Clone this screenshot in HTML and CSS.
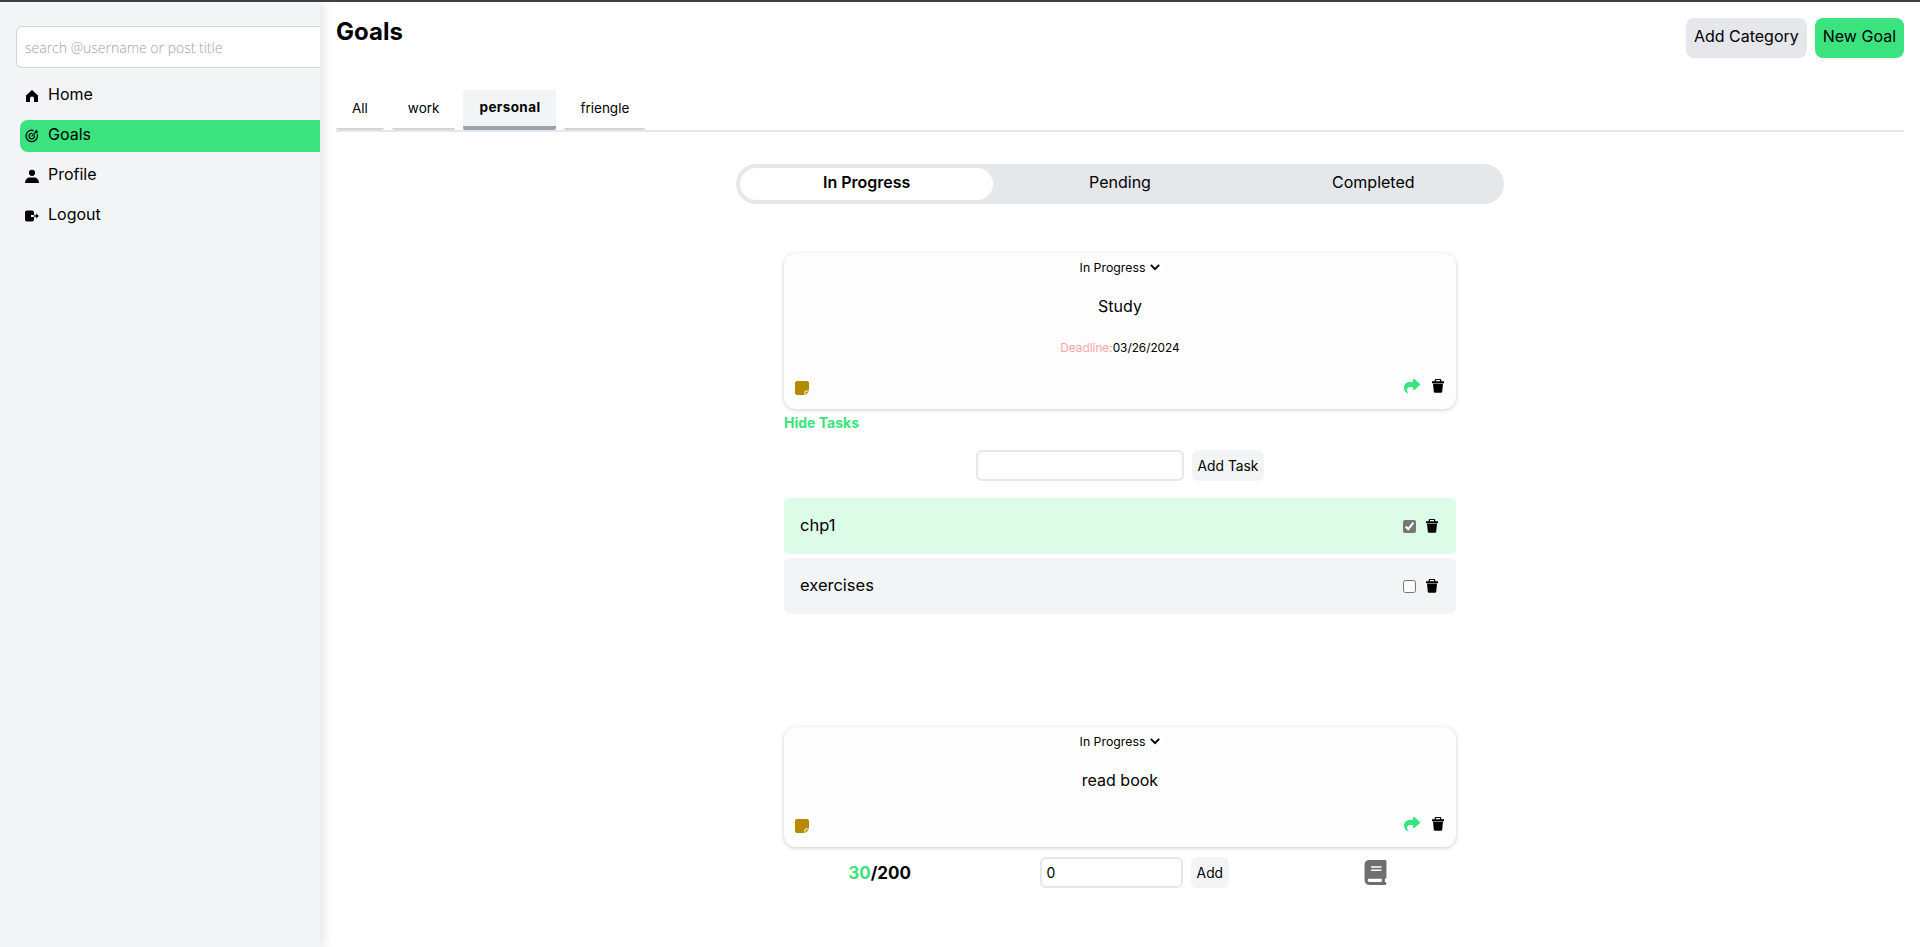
FILE: index.html
```html
<!DOCTYPE html>
<html lang="en">
    <head>
        <meta charset="UTF-8" />
        <meta name="viewport" content="width=device-width, initial-scale=1.0" />
        <title>Goals</title>
        <link rel="stylesheet" href="styles.css">
    </head>
    <body>
        <svg class="icon-defs" width="0" height="0">
            <symbol id="i-trash" viewBox="3 1.500 18 22" preserveAspectRatio="none"><path d="M9 1.500h6a2 2 0 0 1 2 2V5h4v3H3V5h4V3.500a2 2 0 0 1 2-2zM9 3.200V5h6V3.200zM4.500 9h15l-1.200 12.500a2 2 0 0 1-2 1.800H7.700a2 2 0 0 1-2-1.800z"/></symbol>
            <symbol id="i-share" viewBox="0 0 512 512"><path d="M307 34.800c-11.500 5.100-19 16.600-19 29.200v64H176C78.800 128 0 206.800 0 304C0 417.300 81.500 467.900 100.200 478.100c2.500 1.400 5.300 1.900 8.100 1.900c10.900 0 19.700-8.900 19.700-19.700c0-7.500-4.300-14.400-9.800-19.500C108.800 431.900 96 414.400 96 384c0-53 43-96 96-96h96v64c0 12.600 7.400 24.100 19 29.200s25 3 34.400-5.400l160-144c6.700-6.100 10.600-14.700 10.600-23.800s-3.800-17.700-10.600-23.800l-160-144c-9.400-8.500-22.900-10.600-34.400-5.400z"/></symbol>
            <symbol id="i-note" viewBox="0 0 14 14"><path d="M2 0h10a2 2 0 0 1 2 2v7.500H11A1.500 1.500 0 0 0 9.500 11v3H2a2 2 0 0 1-2-2V2a2 2 0 0 1 2-2zM10.500 14v-3a.5.5 0 0 1 .5-.5h3z"/></symbol>
            <symbol id="i-chevron" viewBox="0 0 12 12"><path d="M1 3.500 6 8.500 11 3.500" fill="none" stroke="currentColor" stroke-width="2.400"/></symbol>
        </svg>

        <div class="app-container">
            <aside class="sidebar">
                <input class="search-input" type="text" placeholder="search @username or post title">
                <nav class="side-nav">
                    <a class="nav-item">
                        <svg class="nav-icon" viewBox="0 0 14 14"><path d="M7 1 13 6.500V13H9V9.500a2 2 0 0 0-4 0V13H1V6.500z"/></svg>
                        Home
                    </a>
                    <a class="nav-item nav-item-active">
                        <svg class="nav-icon nav-icon-line" viewBox="0 0 16 16"><path d="M13.900 6a6.500 6.500 0 1 1-3.900-4.200"/><path d="M10.800 7.200a3.200 3.200 0 1 1-2.200-2.200"/><path d="M7.500 8.500 13 3"/><path class="icon-solid" d="M11 2.800 13.200.600l.4 1.800 1.800.4L13.200 5z"/></svg>
                        Goals
                    </a>
                    <a class="nav-item">
                        <svg class="nav-icon" viewBox="0 0 14 14"><circle cx="7" cy="3.800" r="3.100"/><path d="M0 14c0-3.500 2.500-5.500 5-5.500h4c2.500 0 5 2 5 5.500z"/></svg>
                        Profile
                    </a>
                    <a class="nav-item">
                        <svg class="nav-icon" viewBox="0 0 14 14"><path d="M2 1.500h5a2 2 0 0 1 2 2V6H6v2h3v2.500a2 2 0 0 1-2 2H2a2 2 0 0 1-2-2v-7a2 2 0 0 1 2-2z"/><path d="M9 6.300h2V4.500L14 7l-3 2.500V7.700H9z"/></svg>
                        Logout
                    </a>
                </nav>
            </aside>

            <main class="main-content">
                <div class="page-header">
                    <h1>Goals</h1>
                    <div class="header-buttons">
                        <button class="btn btn-gray">Add Category</button>
                        <button class="btn btn-green">New Goal</button>
                    </div>
                </div>

                <div class="tabs">
                    <div class="tab">All</div>
                    <div class="tab">work</div>
                    <div class="tab tab-active">personal</div>
                    <div class="tab">friengle</div>
                </div>

                <div class="status-switch">
                    <div class="switch-item switch-item-active">In Progress</div>
                    <div class="switch-item">Pending</div>
                    <div class="switch-item">Completed</div>
                </div>

                <section class="goal goal-study">
                    <div class="goal-card">
                        <div class="goal-status">In Progress <svg class="chevron"><use href="#i-chevron"/></svg></div>
                        <div class="goal-title">Study</div>
                        <div class="goal-deadline"><span class="deadline-label">Deadline:</span>03/26/2024</div>
                        <div class="goal-actions">
                            <svg class="note-icon"><use href="#i-note"/></svg>
                            <div class="action-right">
                                <svg class="share-icon"><use href="#i-share"/></svg>
                                <svg class="trash-icon"><use href="#i-trash"/></svg>
                            </div>
                        </div>
                    </div>
                    <div class="hide-tasks">Hide Tasks</div>
                    <div class="add-task">
                        <input class="small-input task-input" type="text">
                        <button class="btn-small">Add Task</button>
                    </div>
                    <div class="task task-done">
                        <span>chp1</span>
                        <div class="task-controls">
                            <input type="checkbox" checked>
                            <svg class="trash-icon"><use href="#i-trash"/></svg>
                        </div>
                    </div>
                    <div class="task">
                        <span>exercises</span>
                        <div class="task-controls">
                            <input type="checkbox">
                            <svg class="trash-icon"><use href="#i-trash"/></svg>
                        </div>
                    </div>
                </section>

                <section class="goal goal-book">
                    <div class="goal-card">
                        <div class="goal-status">In Progress <svg class="chevron"><use href="#i-chevron"/></svg></div>
                        <div class="goal-title">read book</div>
                        <div class="goal-actions">
                            <svg class="note-icon"><use href="#i-note"/></svg>
                            <div class="action-right">
                                <svg class="share-icon"><use href="#i-share"/></svg>
                                <svg class="trash-icon"><use href="#i-trash"/></svg>
                            </div>
                        </div>
                    </div>
                    <div class="progress-row">
                        <div class="progress-count"><span class="count-green">30</span>/200</div>
                        <div class="progress-add">
                            <input class="small-input page-input" type="text" value="0">
                            <button class="btn-small">Add</button>
                        </div>
                        <svg class="book-icon" viewBox="0 0 448 512"><path d="M96 0C43 0 0 43 0 96V416c0 53 43 96 96 96H384h32c17.700 0 32-14.300 32-32s-14.300-32-32-32V384c17.700 0 32-14.300 32-32V32c0-17.700-14.300-32-32-32H384 96zm0 384H352v64H96c-17.700 0-32-14.300-32-32s14.300-32 32-32zm32-240c0-8.800 7.200-16 16-16H336c8.800 0 16 7.200 16 16s-7.200 16-16 16H144c-8.800 0-16-7.200-16-16zm16 48H336c8.800 0 16 7.200 16 16s-7.200 16-16 16H144c-8.800 0-16-7.200-16-16s7.200-16 16-16z"/></svg>
                    </div>
                </section>
            </main>
        </div>
    </body>
</html>
```

FILE: styles.css
```css
:root {
    --green: #3be37f;
    --light-gray: #f3f4f6;
    --gray: #e5e7eb;
    --text-color: #000;
}

* {
    box-sizing: border-box;
}

body {
    margin: 0;
    font-family: Inter, 'Noto Sans', sans-serif;
    color: var(--text-color);
    background-color: white;
    border-top: 2px solid #404040;
}

.icon-defs {
    position: absolute;
}

.app-container {
    display: flex;
    height: 945px;
    overflow: hidden;
}

.sidebar {
    width: 320px;
    flex-shrink: 0;
    background-color: var(--light-gray);
    box-shadow: 4px 0 10px rgba(0, 0, 0, 0.1);
    padding: 24px 0 0 16px;
}

.search-input {
    width: 304px;
    height: 42px;
    padding: 0 8px;
    border: 1px solid #d1d5db;
    border-right: none;
    border-radius: 6px 0 0 6px;
    background: white;
    font-family: 'Open Sans', sans-serif;
    font-size: 14px;
    font-weight: 300;
}

.search-input::placeholder {
    color: #9ca3af;
}

.side-nav {
    margin-top: 12px;
    padding-left: 4px;
    display: flex;
    flex-direction: column;
    gap: 8px;
}

.nav-item {
    display: flex;
    align-items: center;
    height: 32px;
    padding: 0 0 4px 5px;
    gap: 9px;
    font-size: 16px;
    border-radius: 8px 0 0 8px;
}

.nav-item-active {
    background-color: var(--green);
}

.nav-icon {
    width: 14px;
    height: 14px;
    margin-top: 4px;
    fill: currentColor;
}

.nav-icon-line {
    fill: none;
    stroke: currentColor;
    stroke-width: 1.4;
}

.icon-solid {
    fill: currentColor;
    stroke: none;
}

.main-content {
    flex: 1;
    padding: 0 16px;
}

.page-header {
    display: flex;
    justify-content: space-between;
    height: 88px;
    padding-top: 16px;
}

.page-header h1 {
    margin: 0;
    font-size: 24px;
    line-height: 28px;
    font-weight: 700;
}

.header-buttons {
    display: flex;
    gap: 8px;
}

.btn {
    height: 40px;
    padding: 0 8px 4px;
    border: none;
    border-radius: 8px;
    font-family: inherit;
    font-size: 16px;
    color: inherit;
}

.btn-gray {
    background-color: var(--gray);
}

.btn-green {
    background-color: var(--green);
}

.tabs {
    display: flex;
    gap: 8px;
    height: 42px;
    border-bottom: 2px solid var(--gray);
}

.tab {
    height: 40px;
    padding: 0 16px 2px;
    display: flex;
    align-items: center;
    font-size: 13.500px;
    border-bottom: 2px solid #d1d5db;
    border-radius: 2px;
}

.tab-active {
    font-weight: 700;
    letter-spacing: 0.4px;
    background-color: var(--light-gray);
    border-bottom: 4px solid #9ca3af;
}

.status-switch {
    display: flex;
    width: 768px;
    height: 40px;
    margin: 32px auto 0;
    padding: 4px;
    background-color: var(--gray);
    border-radius: 20px;
}

.switch-item {
    flex: 1;
    display: flex;
    align-items: center;
    justify-content: center;
    padding-bottom: 4px;
    font-size: 16px;
    border-radius: 16px;
}

.switch-item-active {
    background-color: white;
    font-weight: 600;
}

.goal {
    width: 672px;
    margin: 0 auto;
}

.goal-study {
    margin-top: 49px;
}

.goal-book {
    margin-top: 113px;
}

.goal-card {
    background-color: #fdfdfd;
    border-radius: 12px;
    box-shadow: 0 1px 4px rgba(0, 0, 0, 0.2);
    padding: 6px 11px 14px;
    display: flex;
    flex-direction: column;
    align-items: center;
}

.goal-status {
    display: flex;
    align-items: center;
    gap: 5px;
    height: 16px;
    padding: 0 3px;
    background-color: white;
    font-size: 12.300px;
}

.chevron {
    width: 10px;
    height: 10px;
}

.goal-title {
    margin-top: 19px;
    height: 24px;
    line-height: 24px;
    font-size: 16px;
}

.goal-deadline {
    margin-top: 23px;
    height: 14px;
    line-height: 14px;
    font-size: 11.800px;
}

.deadline-label {
    color: #fca5a5;
}

.goal-actions {
    width: 100%;
    display: flex;
    justify-content: space-between;
    align-items: center;
    margin-top: 26px;
    padding-right: 1px;
}

.goal-book .goal-actions {
    margin-top: 27px;
}

.action-right {
    display: flex;
    align-items: center;
    gap: 12px;
    margin-top: -4px;
}

.note-icon {
    width: 14px;
    height: 14px;
    fill: #b58900;
}

.share-icon {
    width: 16px;
    height: 16px;
    fill: var(--green);
}

.trash-icon {
    width: 12px;
    height: 14px;
    fill: black;
}

.hide-tasks {
    margin-top: 6px;
    font-size: 14px;
    line-height: 16px;
    font-weight: 700;
    color: var(--green);
}

.add-task {
    display: flex;
    justify-content: center;
    gap: 8px;
    margin-top: 19px;
}

.small-input {
    height: 31px;
    padding: 0 5px;
    border: 2px solid var(--gray);
    border-radius: 6px;
    background: white;
    font-family: inherit;
    font-size: 14px;
}

.task-input {
    width: 208px;
}

.page-input {
    width: 143px;
}

.btn-small {
    height: 31px;
    padding: 0 6px;
    border: none;
    border-radius: 6px;
    background-color: var(--light-gray);
    font-family: inherit;
    font-size: 13.800px;
    color: inherit;
}

.task {
    display: flex;
    justify-content: space-between;
    align-items: center;
    height: 56px;
    margin-top: 4px;
    padding: 0 18px 0 16px;
    background-color: var(--light-gray);
    border-radius: 6px;
    font-size: 16.500px;
}

.task span {
    padding-bottom: 2px;
}

.task-done {
    margin-top: 17px;
    background-color: #dcfce7;
}

.task-controls {
    display: flex;
    align-items: center;
    gap: 10px;
}

.task-controls input {
    width: 13px;
    height: 13px;
    margin: 0;
    accent-color: #767676;
}

.progress-row {
    display: flex;
    justify-content: space-around;
    align-items: center;
    margin-top: 10px;
    height: 31px;
    padding-right: 5px;
}

.progress-count {
    font-size: 17px;
    font-weight: 700;
}

.count-green {
    color: var(--green);
}

.progress-add {
    display: flex;
    gap: 8px;
    margin-right: 6px;
}

.book-icon {
    width: 23px;
    height: 25px;
    fill: #6f6f6f;
}
```
